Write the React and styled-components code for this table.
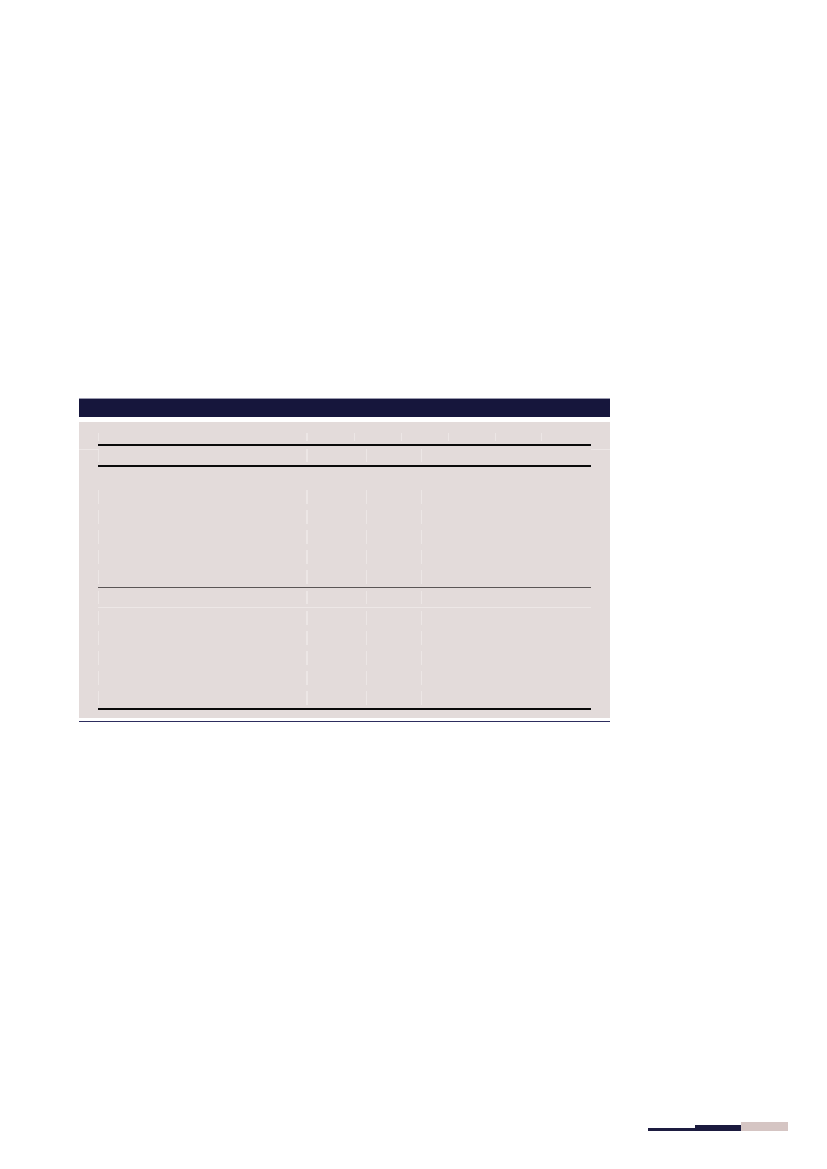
import styled, { createGlobalStyle } from "styled-components";

const GlobalStyle = createGlobalStyle`
  html, body {
    margin: 0;
    padding: 0;
    background: #ffffff;
    font-family: "Liberation Sans", Arial, sans-serif;
  }
`;

const Page = styled.div`
  width: 827px;
  min-height: 1169px;
  display: flex;
  flex-direction: column;
  box-sizing: border-box;
`;

const Figure = styled.section`
  margin: 398px 0 0 79px;
  width: 531px;
  display: flex;
  flex-direction: column;
`;

const TitleBar = styled.div`
  height: 19px;
  background: #16163c;
  border-top: 1px solid #9a9aae;
  box-sizing: border-box;
`;

const Panel = styled.div`
  position: relative;
  margin-top: 5px;
  height: 296px;
  background: #e3dbda;
  padding: 8px 19px 0;
  box-sizing: border-box;

  /* faint guide line on the margins, as in the reference */
  &::before,
  &::after {
    content: "";
    position: absolute;
    top: 27px;
    width: 19px;
    height: 1px;
    background: #ede7e6;
  }
  &::before { left: 0; }
  &::after { right: 0; }
`;

const BottomRule = styled.div`
  margin-top: 3px;
  height: 1px;
  background: #2d2d5e;
`;

const Grid = styled.div`
  display: flex;
  flex-direction: column;
`;

const Row = styled.div`
  display: flex;
  height: ${(p) => p.$h || 20}px;
  border-bottom: ${(p) =>
    p.$rule === "thick"
      ? "2px solid #0a0a0a"
      : p.$rule === "mid"
      ? "1px solid #5a5555"
      : p.$rule === "faint"
      ? "1px solid #ede7e6"
      : "none"};
  box-sizing: border-box;
`;

const Cell = styled.div`
  position: relative;
  width: ${(p) => p.$w}px;
  flex: ${(p) => (p.$w ? "none" : "1")};

  &::before {
    content: "";
    display: ${(p) => (p.$tick ? "block" : "none")};
    position: absolute;
    left: 0;
    top: 3px;
    bottom: 3px;
    width: ${(p) => (p.$double ? 2 : 1)}px;
    background: #ece6e5;
  }
`;

const Footer = styled.footer`
  margin-top: auto;
  padding: 0 39px 38px 0;
  display: flex;
  justify-content: flex-end;
  align-items: flex-end;
`;

const Bar = styled.div`
  width: ${(p) => p.$w}px;
  height: ${(p) => p.$h}px;
  background: ${(p) => p.$c};
`;

const headCols = [208, 48, 47, 47, 47, 46, 50];
const bodyCols = [208, 60, 55, 0];

function HeadRow({ h, rule }) {
  return (
    <Row $h={h} $rule={rule}>
      {headCols.map((w, i) => (
        <Cell key={i} $w={w} $tick $double={i === 1} />
      ))}
    </Row>
  );
}

function BodyRow({ h, rule, ticks = true }) {
  return (
    <Row $h={h} $rule={rule}>
      {bodyCols.map((w, i) => (
        <Cell key={i} $w={w || undefined} $tick={ticks && i < 4} $double={i === 1} />
      ))}
    </Row>
  );
}

export default function App() {
  return (
    <>
      <GlobalStyle />
      <Page>
        <Figure>
          <TitleBar />
          <Panel>
            <Grid>
              <HeadRow h={16} rule="thick" />
              <BodyRow h={21} rule="thick" />
              <BodyRow h={20} ticks={false} />
              <BodyRow />
              <BodyRow />
              <BodyRow />
              <BodyRow />
              <BodyRow h={21} rule="mid" />
              <BodyRow h={20} rule="faint" />
              <BodyRow />
              <BodyRow />
              <BodyRow />
              <BodyRow />
              <BodyRow h={22} rule="thick" />
            </Grid>
          </Panel>
          <BottomRule />
        </Figure>
        <Footer>
          <Bar $w={47} $h={3} $c="#1d1c40" />
          <Bar $w={46} $h={6} $c="#1b1a3e" />
          <Bar $w={47} $h={9} $c="#d5c5c3" />
        </Footer>
      </Page>
    </>
  );
}
